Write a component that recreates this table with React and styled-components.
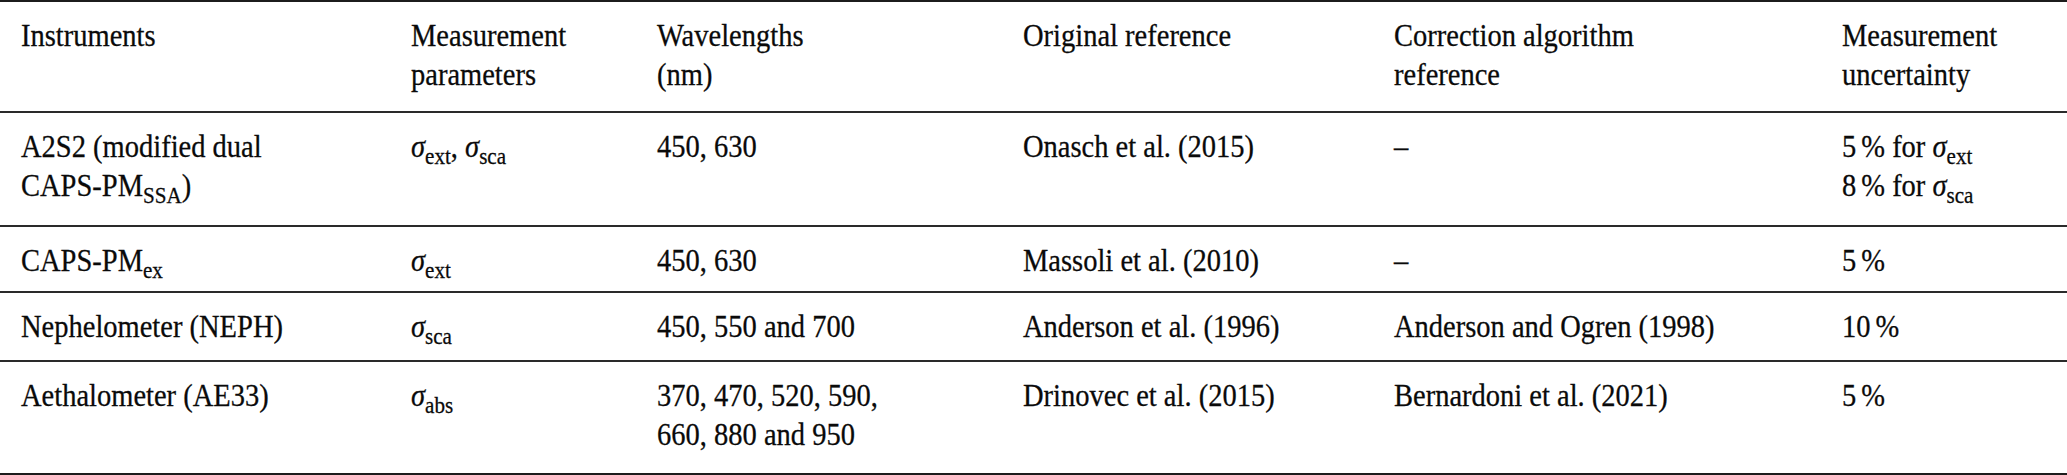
import React from 'react'
import styled, { createGlobalStyle } from 'styled-components'

const GlobalStyle = createGlobalStyle`
  html, body {
    margin: 0;
    padding: 0;
    background: #fff;
  }
`

const Table = styled.div`
  width: 2067px;
  font-family: "Liberation Serif", "Times New Roman", serif;
  font-size: 28.5px;
  line-height: 36px;
  color: #0a0a0a;
  -webkit-text-stroke: 0.25px #0a0a0a;
  border-top: 2px solid #1c1c1c;
  border-bottom: 2px solid #1c1c1c;
`

const Row = styled.div`
  display: grid;
  grid-template-columns: 390px 246px 366px 371px 448px 246px;
  box-sizing: border-box;
  height: ${({ $h }) => $h}px;
  border-bottom: 2px solid #2a2a2a;
  &:last-child {
    border-bottom: none;
  }
`

const Cell = styled.div`
  padding: 15px 0 0 21px;
  white-space: nowrap;
`

// the source table is typeset a little condensed, so the glyphs are stretched upward
const Text = styled.span`
  display: block;
  transform: scaleY(1.08);
  transform-origin: top left;
`

const Sigma = styled.span`
  font-style: italic;
`

const Sub = styled.sub`
  font-size: 0.74em;
  line-height: 0;
  vertical-align: -0.3em;
`

const Pct = styled.span`
  margin-left: 5px;
`

const sig = (s) => (
  <>
    <Sigma>σ</Sigma>
    <Sub>{s}</Sub>
  </>
)

const pct = (n) => (
  <>
    {n}
    <Pct>%</Pct>
  </>
)

const header = [
  'Instruments',
  <>Measurement<br />parameters</>,
  <>Wavelengths<br />(nm)</>,
  'Original reference',
  <>Correction algorithm<br />reference</>,
  <>Measurement<br />uncertainty</>,
]

const rows = [
  {
    h: 114,
    cells: [
      <>A2S2 (modified dual<br />CAPS-PM<Sub>SSA</Sub>)</>,
      <>{sig('ext')}, {sig('sca')}</>,
      '450, 630',
      'Onasch et al. (2015)',
      '–',
      <>{pct(5)} for {sig('ext')}<br />{pct(8)} for {sig('sca')}</>,
    ],
  },
  {
    h: 66,
    cells: [
      <>CAPS-PM<Sub>ex</Sub></>,
      sig('ext'),
      '450, 630',
      'Massoli et al. (2010)',
      '–',
      pct(5),
    ],
  },
  {
    h: 69,
    cells: [
      'Nephelometer (NEPH)',
      sig('sca'),
      '450, 550 and 700',
      'Anderson et al. (1996)',
      'Anderson and Ogren (1998)',
      pct(10),
    ],
  },
  {
    h: 111,
    cells: [
      'Aethalometer (AE33)',
      sig('abs'),
      <>370, 470, 520, 590,<br />660, 880 and 950</>,
      'Drinovec et al. (2015)',
      'Bernardoni et al. (2021)',
      pct(5),
    ],
  },
]

const App = () => {
  return (
    <>
      <GlobalStyle />
      <Table>
        <Row $h={111}>
          {header.map((c, i) => (
            <Cell key={i}>
              <Text>{c}</Text>
            </Cell>
          ))}
        </Row>
        {rows.map((r, i) => (
          <Row key={i} $h={r.h}>
            {r.cells.map((c, j) => (
              <Cell key={j}>
                <Text>{c}</Text>
              </Cell>
            ))}
          </Row>
        ))}
      </Table>
    </>
  )
}

export default App
